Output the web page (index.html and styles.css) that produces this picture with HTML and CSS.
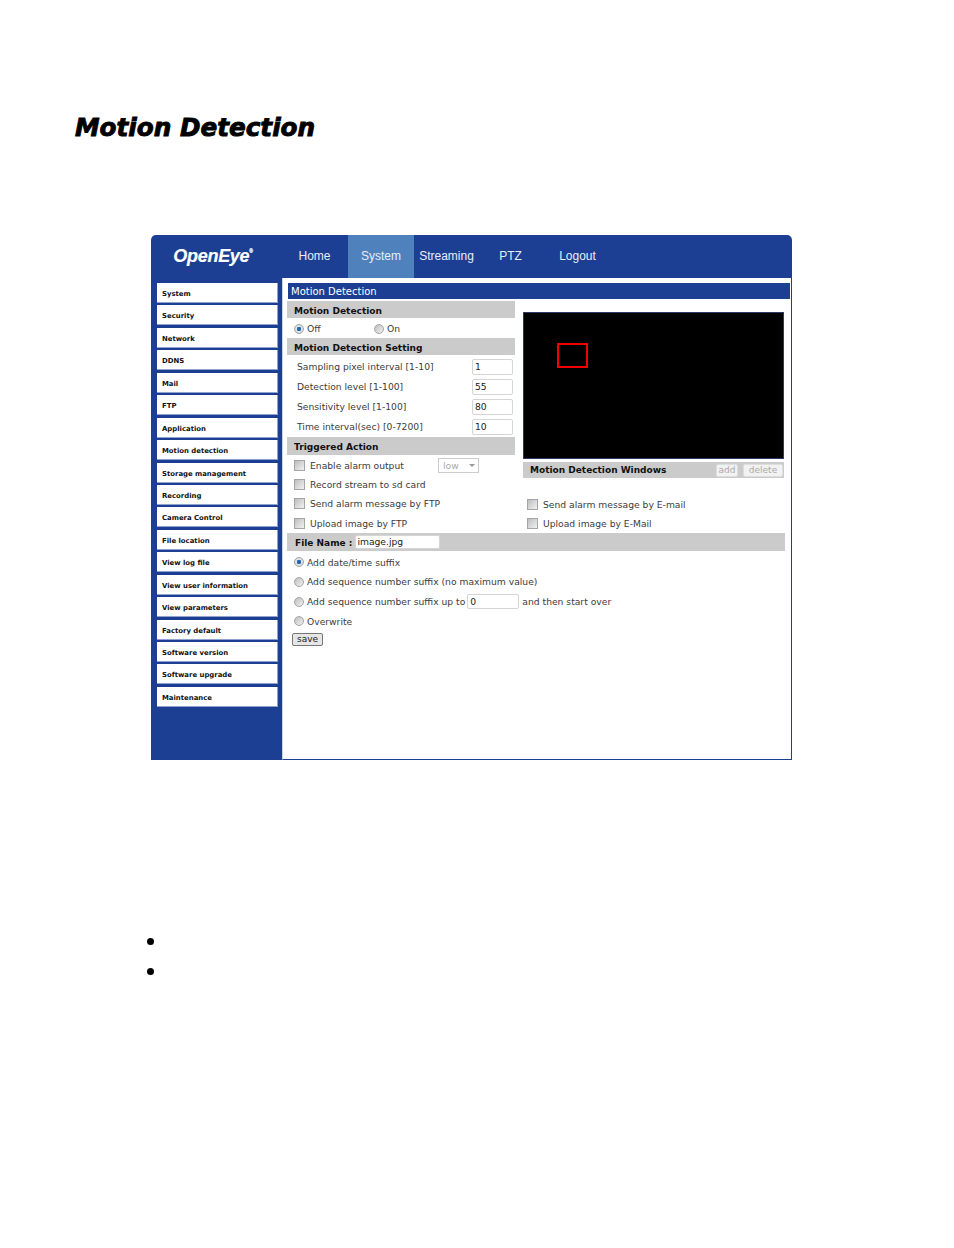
FILE: index.html
```html
<html>

<head>
    <title>Motion Detection</title>
    <link rel="stylesheet" href="styles.css">
</head>

<body>
    <h1 class="page-title">Motion Detection</h1>

    <div class="app">
        <div class="topbar">
            <div class="logo">OpenEye<sup>&reg;</sup></div>
            <div class="nav nav-home">Home</div>
            <div class="nav nav-system active">System</div>
            <div class="nav nav-streaming">Streaming</div>
            <div class="nav nav-ptz">PTZ</div>
            <div class="nav nav-logout">Logout</div>
        </div>
        <div class="body-row">
            <div class="sidebar">
                <div class="side-item">System</div>
                <div class="side-item">Security</div>
                <div class="side-item">Network</div>
                <div class="side-item">DDNS</div>
                <div class="side-item">Mail</div>
                <div class="side-item">FTP</div>
                <div class="side-item">Application</div>
                <div class="side-item">Motion detection</div>
                <div class="side-item">Storage management</div>
                <div class="side-item">Recording</div>
                <div class="side-item">Camera Control</div>
                <div class="side-item">File location</div>
                <div class="side-item">View log file</div>
                <div class="side-item">View user information</div>
                <div class="side-item">View parameters</div>
                <div class="side-item">Factory default</div>
                <div class="side-item">Software version</div>
                <div class="side-item">Software upgrade</div>
                <div class="side-item">Maintenance</div>
            </div>
            <div class="content">
                <div class="content-title">Motion Detection</div>
                <div class="columns">
                    <div class="col-left">
                        <div class="section">Motion Detection</div>
                        <div class="row onoff">
                            <label class="pick pick-off"><input type="radio" name="md" checked>Off</label>
                            <label class="pick"><input type="radio" name="md">On</label>
                        </div>
                        <div class="section">Motion Detection Setting</div>
                        <div class="fields">
                            <div class="field"><span>Sampling pixel interval [1-10]</span><input type="text" value="1"></div>
                            <div class="field"><span>Detection level [1-100]</span><input type="text" value="55"></div>
                            <div class="field"><span>Sensitivity level [1-100]</span><input type="text" value="80"></div>
                            <div class="field"><span>Time interval(sec) [0-7200]</span><input type="text" value="10"></div>
                        </div>
                        <div class="section section-action">Triggered Action</div>
                        <div class="row check">
                            <label class="pick pick-alarm"><input type="checkbox">Enable alarm output</label>
                            <div class="select">low<i></i></div>
                        </div>
                        <div class="row check"><label class="pick"><input type="checkbox">Record stream to sd card</label></div>
                        <div class="row check"><label class="pick"><input type="checkbox">Send alarm message by FTP</label></div>
                        <div class="row check"><label class="pick"><input type="checkbox">Upload image by FTP</label></div>
                    </div>
                    <div class="col-right">
                        <div class="preview">
                            <div class="zone"></div>
                        </div>
                        <div class="windows-bar">
                            <b>Motion Detection Windows</b>
                            <button class="btn-off btn-add">add</button>
                            <button class="btn-off btn-delete">delete</button>
                        </div>
                        <div class="right-checks">
                            <div class="row check"><label class="pick"><input type="checkbox">Send alarm message by E-mail</label></div>
                            <div class="row check"><label class="pick"><input type="checkbox">Upload image by E-Mail</label></div>
                        </div>
                    </div>
                </div>
                <div class="file-bar">
                    <b>File Name :</b>
                    <input type="text" value="image.jpg">
                </div>
                <div class="suffix">
                    <div class="row radio"><label class="pick"><input type="radio" name="sfx" checked>Add date/time suffix</label></div>
                    <div class="row radio"><label class="pick"><input type="radio" name="sfx">Add sequence number suffix (no maximum value)</label></div>
                    <div class="row radio">
                        <label class="pick"><input type="radio" name="sfx">Add sequence number suffix up to</label>
                        <input class="upto" type="text" value="0">
                        <span>and then start over</span>
                    </div>
                    <div class="row radio"><label class="pick"><input type="radio" name="sfx">Overwrite</label></div>
                </div>
                <button class="save">save</button>
            </div>
        </div>
    </div>

    <div class="bullets">
        <div class="dot"></div>
        <div class="dot"></div>
    </div>
</body>

</html>
```

FILE: styles.css
```css
* {
    margin: 0;
    padding: 0;
    box-sizing: border-box;
}

:root {
    --blue: #1c3f94;
    --light-blue: #4f81bd;
    --gray: #cbcbcb;
    --text: #3c3c3c;
}

body {
    background-color: white;
    font-family: "DejaVu Sans", sans-serif;
    font-size: 9.2px;
    color: var(--text);
}

.page-title {
    margin: 113px 0 0 75px;
    height: 30px;
    line-height: 30px;
    font-size: 24.7px;
    font-style: italic;
    font-weight: bold;
    color: black;
    -webkit-text-stroke: 0.9px black;
}

/* app window */
.app {
    margin: 92px 0 0 151px;
    width: 641px;
    height: 525px;
    display: flex;
    flex-direction: column;
}

.topbar {
    display: flex;
    height: 43px;
    background-color: var(--blue);
    border-radius: 5px 5px 0 0;
    font-family: "Liberation Sans", sans-serif;
    font-size: 12px;
    color: #e8edf6;
}

.logo {
    width: 132px;
    padding-right: 8px;
    line-height: 42px;
    text-align: center;
    font-size: 18px;
    font-style: italic;
    font-weight: bold;
    color: white;
    letter-spacing: -0.3px;
    -webkit-text-stroke: 0.2px white;
}

.logo sup {
    font-size: 5px;
    font-style: normal;
    vertical-align: 9px;
    line-height: 0;
}

.nav {
    line-height: 42px;
    text-align: center;
}

.nav-home {
    width: 65px;
    padding-right: 2px;
}

.nav-system {
    width: 66px;
}

.nav-streaming {
    width: 65px;
}

.nav-ptz {
    width: 63px;
}

.nav-logout {
    width: 71px;
}

.active {
    background-color: var(--light-blue);
}

.body-row {
    display: flex;
    flex: 1;
}

.sidebar {
    width: 131px;
    padding: 5px 4px 0 6px;
    background-color: var(--blue);
    display: flex;
    flex-direction: column;
    gap: 2.44px;
}

.side-item {
    height: 20px;
    line-height: 16px;
    padding: 3px 0 0 5px;
    background-color: white;
    border-right: 1px solid #8fa2d0;
    border-bottom: 1px solid #8fa2d0;
    font-size: 6.9px;
    font-weight: bold;
    color: #111;
    white-space: nowrap;
}

.content {
    flex: 1;
    padding: 5px 1px 0 4px;
    background-color: white;
    border-left: 1px solid #c9d2e6;
    border-right: 1px solid var(--blue);
    border-bottom: 1px solid var(--blue);
}

.content-title {
    height: 16px;
    line-height: 17px;
    margin-left: 1px;
    padding-left: 3px;
    background-color: var(--blue);
    color: white;
    font-size: 10px;
}

.columns {
    display: flex;
    margin-top: 2px;
}

.col-left {
    width: 228px;
}

.col-right {
    width: 262px;
    margin-left: 8px;
    padding-top: 11px;
}

.section {
    height: 17px;
    line-height: 20px;
    padding-left: 7px;
    background-color: var(--gray);
    font-size: 9.05px;
    font-weight: bold;
    color: #111;
}

.section-action {
    height: 18px;
}

.row {
    display: flex;
    align-items: center;
}

.onoff {
    height: 20px;
    padding: 1px 0 0 7px;
}

.pick {
    display: flex;
    align-items: center;
    white-space: nowrap;
}

.pick-off {
    width: 80px;
}

.pick-alarm {
    width: 144px;
}

/* radios and checkboxes of the old browser theme */
.pick input {
    appearance: none;
    flex: none;
    background: linear-gradient(135deg, #bdbdbd, #f2f2f2);
    border: 1px solid #a5a5a5;
}

.pick input[type="radio"] {
    width: 10px;
    height: 10px;
    margin-right: 3px;
    border-radius: 50%;
}

.pick input[type="radio"]:checked {
    background: radial-gradient(circle, #1f5fa8 0, #2a70b8 35%, #dfe6ec 45%, #cfcfcf 100%);
}

.pick input[type="checkbox"] {
    width: 11px;
    height: 11px;
    margin-right: 5px;
}

.fields {
    padding: 1.5px 2px 0.5px 10px;
}

.field {
    display: flex;
    justify-content: space-between;
    align-items: center;
    height: 20px;
}

input[type="text"] {
    padding-left: 2px;
    border: 1px solid #d5d5d5;
    border-radius: 2px;
    background-color: white;
    font-family: "DejaVu Sans", sans-serif;
    font-size: 9.2px;
    color: #222;
    outline: none;
}

.field input {
    width: 41px;
    height: 16px;
}

.check {
    height: 19.3px;
    padding: 1px 0 0 7px;
}

.col-right .check {
    padding-left: 4px;
}

.select {
    position: relative;
    width: 41px;
    height: 15px;
    padding-left: 4px;
    line-height: 13px;
    border: 1px solid #ccc;
    color: #aaa;
}

.select i {
    position: absolute;
    right: 3px;
    top: 5px;
    border-top: 3px solid #999;
    border-left: 3px solid transparent;
    border-right: 3px solid transparent;
}

.preview {
    position: relative;
    height: 147px;
    width: 261px;
    background-color: black;
    border: 1px solid #2c3a63;
}

.zone {
    position: absolute;
    left: 33px;
    top: 30px;
    width: 31px;
    height: 25px;
    border: 2px solid #f00000;
}

.windows-bar {
    display: flex;
    align-items: center;
    height: 16px;
    width: 261px;
    margin-top: 3px;
    padding: 0 1px 0 7px;
    background-color: var(--gray);
    font-size: 9px;
}

.windows-bar b {
    flex: 1;
    color: #111;
}

.btn-off {
    height: 13px;
    border: 1px solid #ddd;
    border-radius: 2px;
    background-color: #f2f2f2;
    font-family: "DejaVu Sans", sans-serif;
    font-size: 9px;
    color: #aaa;
}

.btn-add {
    width: 22px;
    margin-right: 5px;
}

.btn-delete {
    width: 40px;
}

.right-checks {
    margin-top: 16px;
}

.file-bar {
    display: flex;
    align-items: center;
    gap: 3px;
    height: 18px;
    margin-right: 5px;
    padding-left: 8px;
    background-color: var(--gray);
    font-size: 9px;
}

.file-bar b {
    padding-top: 2px;
    color: #111;
}

.file-bar input {
    width: 85px;
    height: 14px;
    padding-left: 1px;
}

.suffix {
    padding: 2px 0 0 7px;
}

.radio {
    height: 19.6px;
}

.upto {
    width: 52px;
    height: 15px;
    margin: 0 3px 0 2px;
    color: #aaa;
}

.save {
    display: block;
    width: 31px;
    height: 13px;
    margin: 2px 0 0 5px;
    border: 1px solid #777;
    border-radius: 2px;
    background-color: #e6e6e6;
    font-family: "DejaVu Sans", sans-serif;
    font-size: 9px;
    color: #222;
}

/* bullets with no text beside them */
.bullets {
    margin: 178px 0 0 147px;
    display: flex;
    flex-direction: column;
    gap: 23px;
}

.dot {
    width: 7px;
    height: 7px;
    border-radius: 50%;
    background-color: black;
}
```
